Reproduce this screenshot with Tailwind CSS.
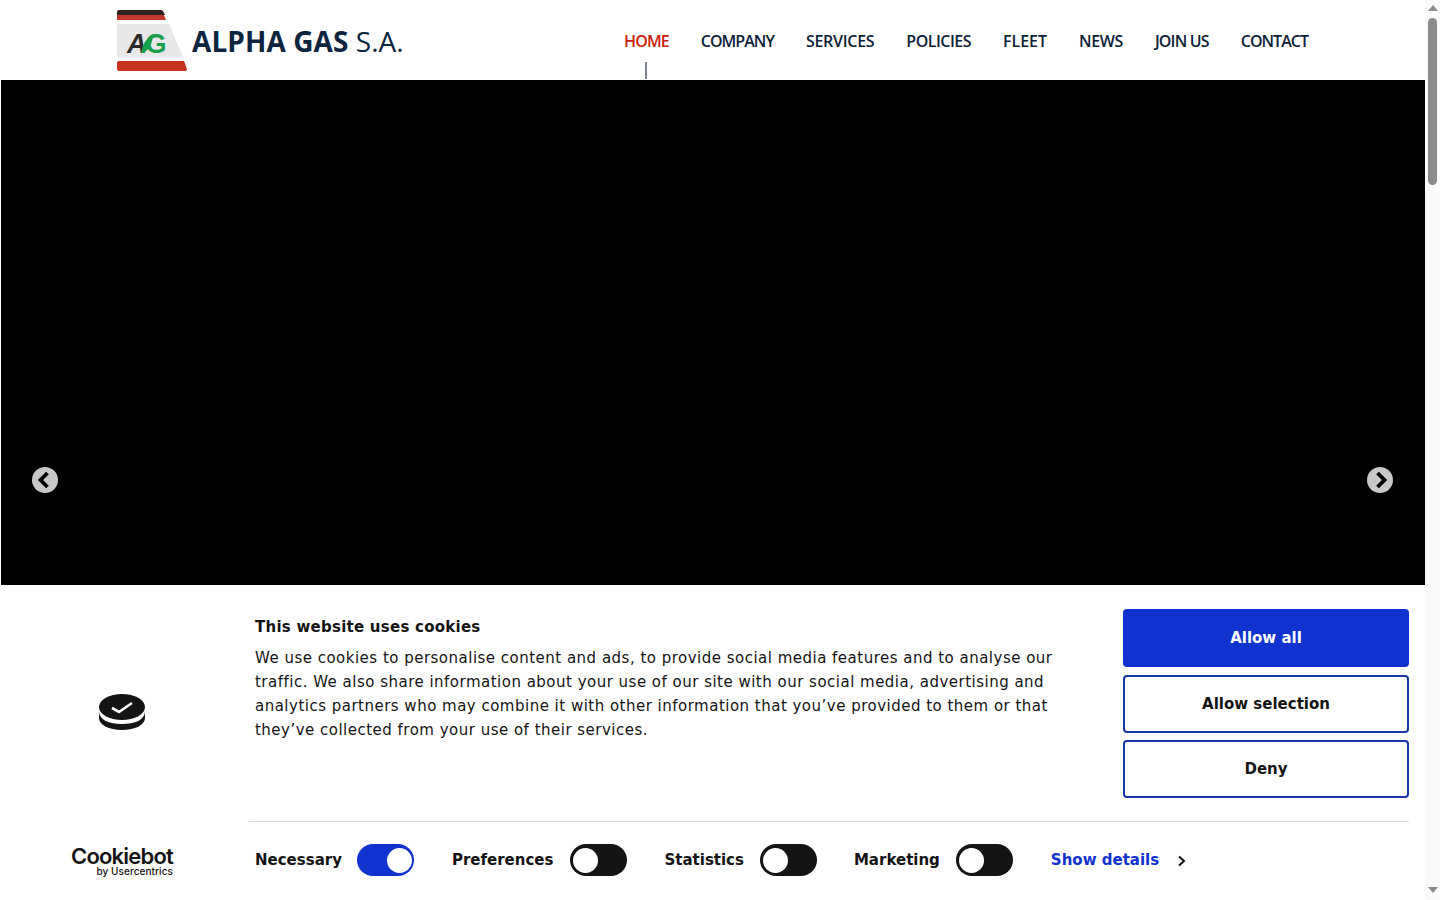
<!DOCTYPE html>
<html lang="en">
<head>
    <meta charset="UTF-8">
    <meta name="viewport" content="width=device-width, initial-scale=1.0">
    <title>Alpha Gas S.A.</title>
    <script src="https://cdn.jsdelivr.net/npm/@tailwindcss/browser@4"></script>
</head>
<body class="h-screen overflow-hidden bg-white flex font-['DejaVu_Sans',sans-serif] text-[#141414]">

    <div class="w-[1425px] h-[900px] flex flex-col">
        <!-- Header -->
        <header class="h-20 flex items-center justify-between pl-[116px] pr-[117px] bg-white">
            <div class="flex items-center gap-[5px]">
                <svg width="71" height="61" viewBox="0 0 71 61">
                    <path d="M1 2 Q1 0 3 0 H45 Q46 0 47 1 L49 5 H1Z" fill="#30231f"/>
                    <path d="M1 5 H48 L50 10 H1Z" fill="#c0392b"/>
                    <path d="M1 14 H53 L67 47 H1Z" fill="#e8e8e8"/>
                    <path d="M1 53 Q1 51 3 51 H68 L71 59 Q71 61 69 61 H3 Q1 61 1 59Z" fill="#c5341f"/>
                    <text x="11" y="43" font-family="Liberation Sans" font-weight="700" font-style="italic" font-size="27" fill="#2b2b2b">A<tspan dx="-1" fill="#17a04a" font-style="normal">G</tspan></text>
                    <path d="M25 43 Q27 30 37 24 Q37 36 28 43Z" fill="#17a04a"/>
                </svg>
                <span class="font-['Open_Sans',sans-serif] font-semibold text-[28px] leading-none tracking-[0.07px] text-[#0d2440] whitespace-nowrap mt-[2px]"><b class="font-bold">ALPHA GAS</b> <span class="font-normal">S.A.</span></span>
            </div>
            <nav class="flex items-center gap-8 font-['Open_Sans',sans-serif] font-semibold text-[16px] text-[#0d2238] mt-[2px]">
                <a class="relative text-[#c8210c] tracking-[-0.9px]">HOME<span class="absolute left-[21px] top-[33px] w-[2px] h-[17px] bg-[#7c8490]"></span></a>
                <a class="tracking-[-0.97px]">COMPANY</a>
                <a class="tracking-[-0.28px]">SERVICES</a>
                <a class="tracking-[-0.52px]">POLICIES</a>
                <a class="tracking-[0px]">FLEET</a>
                <a class="tracking-[-0.4px]">NEWS</a>
                <a class="tracking-[-0.83px]">JOIN US</a>
                <a class="tracking-[-0.97px]">CONTACT</a>
            </nav>
        </header>

        <!-- Slider -->
        <section class="relative h-[505px] ml-[1px] bg-black">
            <button class="absolute left-[31px] top-[387px] w-[26px] h-[26px] rounded-full bg-[#c8c8c8]">
                <svg width="26" height="26" viewBox="0 0 26 26"><path d="M15.5 6 L8.5 13 L15.5 20" fill="none" stroke="#000" stroke-width="3.8"/></svg>
            </button>
            <button class="absolute left-[1366px] top-[387px] w-[26px] h-[26px] rounded-full bg-[#c8c8c8]">
                <svg width="26" height="26" viewBox="0 0 26 26"><path d="M10.5 6 L17.5 13 L10.5 20" fill="none" stroke="#000" stroke-width="3.8"/></svg>
            </button>
        </section>

        <!-- Cookie banner -->
        <section class="flex-1 flex bg-white">
            <div class="w-[249px] flex flex-col items-center pr-[5px]">
                <svg width="46" height="36" viewBox="0 0 46 36" class="mt-[109px]">
                    <path d="M0 17 C0 26 10 30 23 30 C36 30 46 26 46 17 V24 C46 31 36 36 23 36 C10 36 0 31 0 24Z" fill="#141414"/>
                    <ellipse cx="23" cy="13" rx="23" ry="13" fill="#141414"/>
                    <path d="M13 14 L20 18 L33 9" fill="none" stroke="#fff" stroke-width="2.6"/>
                </svg>
                <div class="mt-[116px] flex flex-col items-end font-['Inter',sans-serif] text-[#141414]">
                    <span class="font-semibold text-[22px] leading-[20px] tracking-[-0.8px]">Cookiebot</span>
                    <span class="font-medium text-[10px] leading-[10px] tracking-[0.07px]">by Usercentrics</span>
                </div>
            </div>
            <div class="w-[1160px] flex flex-col">
                <div class="h-[237px] pt-6 pl-[6px] flex justify-between border-b border-[#d6d6d6]">
                    <div class="w-[810px] pt-[9px]">
                        <h2 class="font-bold text-[15px] leading-[18px] tracking-[0.25px]">This website uses cookies</h2>
                        <p class="mt-[10px] text-[15px] leading-6 tracking-[0.49px]">We use cookies to personalise content and ads, to provide social media features and to analyse our traffic. We also share information about your use of our site with our social media, advertising and analytics partners who may combine it with other information that you’ve provided to them or that they’ve collected from your use of their services.</p>
                    </div>
                    <div class="w-[286px] flex flex-col">
                        <button class="h-[58px] rounded bg-[#1032cf] text-white font-bold text-[15px]">Allow all</button>
                        <button class="h-[58px] mt-2 rounded border-2 border-[#1a35a8] font-bold text-[15px]">Allow selection</button>
                        <button class="h-[58px] mt-[7px] rounded border-2 border-[#1a35a8] font-bold text-[15px]">Deny</button>
                    </div>
                </div>
                <div class="flex items-center pl-[6px] pt-[22px] font-bold text-[15px]">
                    <span>Necessary</span>
                    <span class="ml-[15px] w-[57px] h-8 rounded-full bg-[#1032cf] flex items-center justify-end pr-[2px]"><i class="w-[25px] h-[25px] rounded-full bg-white"></i></span>
                    <span class="ml-[38px]">Preferences</span>
                    <span class="ml-[17px] w-[57px] h-8 rounded-full bg-[#141414] flex items-center pl-[3px]"><i class="w-[25px] h-[25px] rounded-full bg-white"></i></span>
                    <span class="ml-[37px]">Statistics</span>
                    <span class="ml-[16px] w-[57px] h-8 rounded-full bg-[#141414] flex items-center pl-[3px]"><i class="w-[25px] h-[25px] rounded-full bg-white"></i></span>
                    <span class="ml-[37px]">Marketing</span>
                    <span class="ml-[16px] w-[57px] h-8 rounded-full bg-[#141414] flex items-center pl-[3px]"><i class="w-[25px] h-[25px] rounded-full bg-white"></i></span>
                    <span class="ml-[38px] mt-[1px] text-[#1032cf]">Show details</span>
                    <svg width="10" height="12" viewBox="0 0 10 12" class="ml-[18px] mt-[1px]"><path d="M2 1.5 L7 6 L2 10.5" fill="none" stroke="#141414" stroke-width="2"/></svg>
                </div>
            </div>
        </section>
    </div>

    <!-- Scrollbar -->
    <div class="w-[15px] h-[900px] bg-[#fafafa] flex flex-col items-center">
        <svg width="10" height="6" viewBox="0 0 10 6" class="mt-[5px]"><path d="M5 0 L10 6 H0Z" fill="#8c8c8c"/></svg>
        <div class="w-[9px] h-[167px] mt-[7px] rounded-full bg-[#8c8c8c]"></div>
        <svg width="10" height="6" viewBox="0 0 10 6" class="mt-[702px]"><path d="M0 0 H10 L5 6Z" fill="#8c8c8c"/></svg>
    </div>

</body>
</html>
